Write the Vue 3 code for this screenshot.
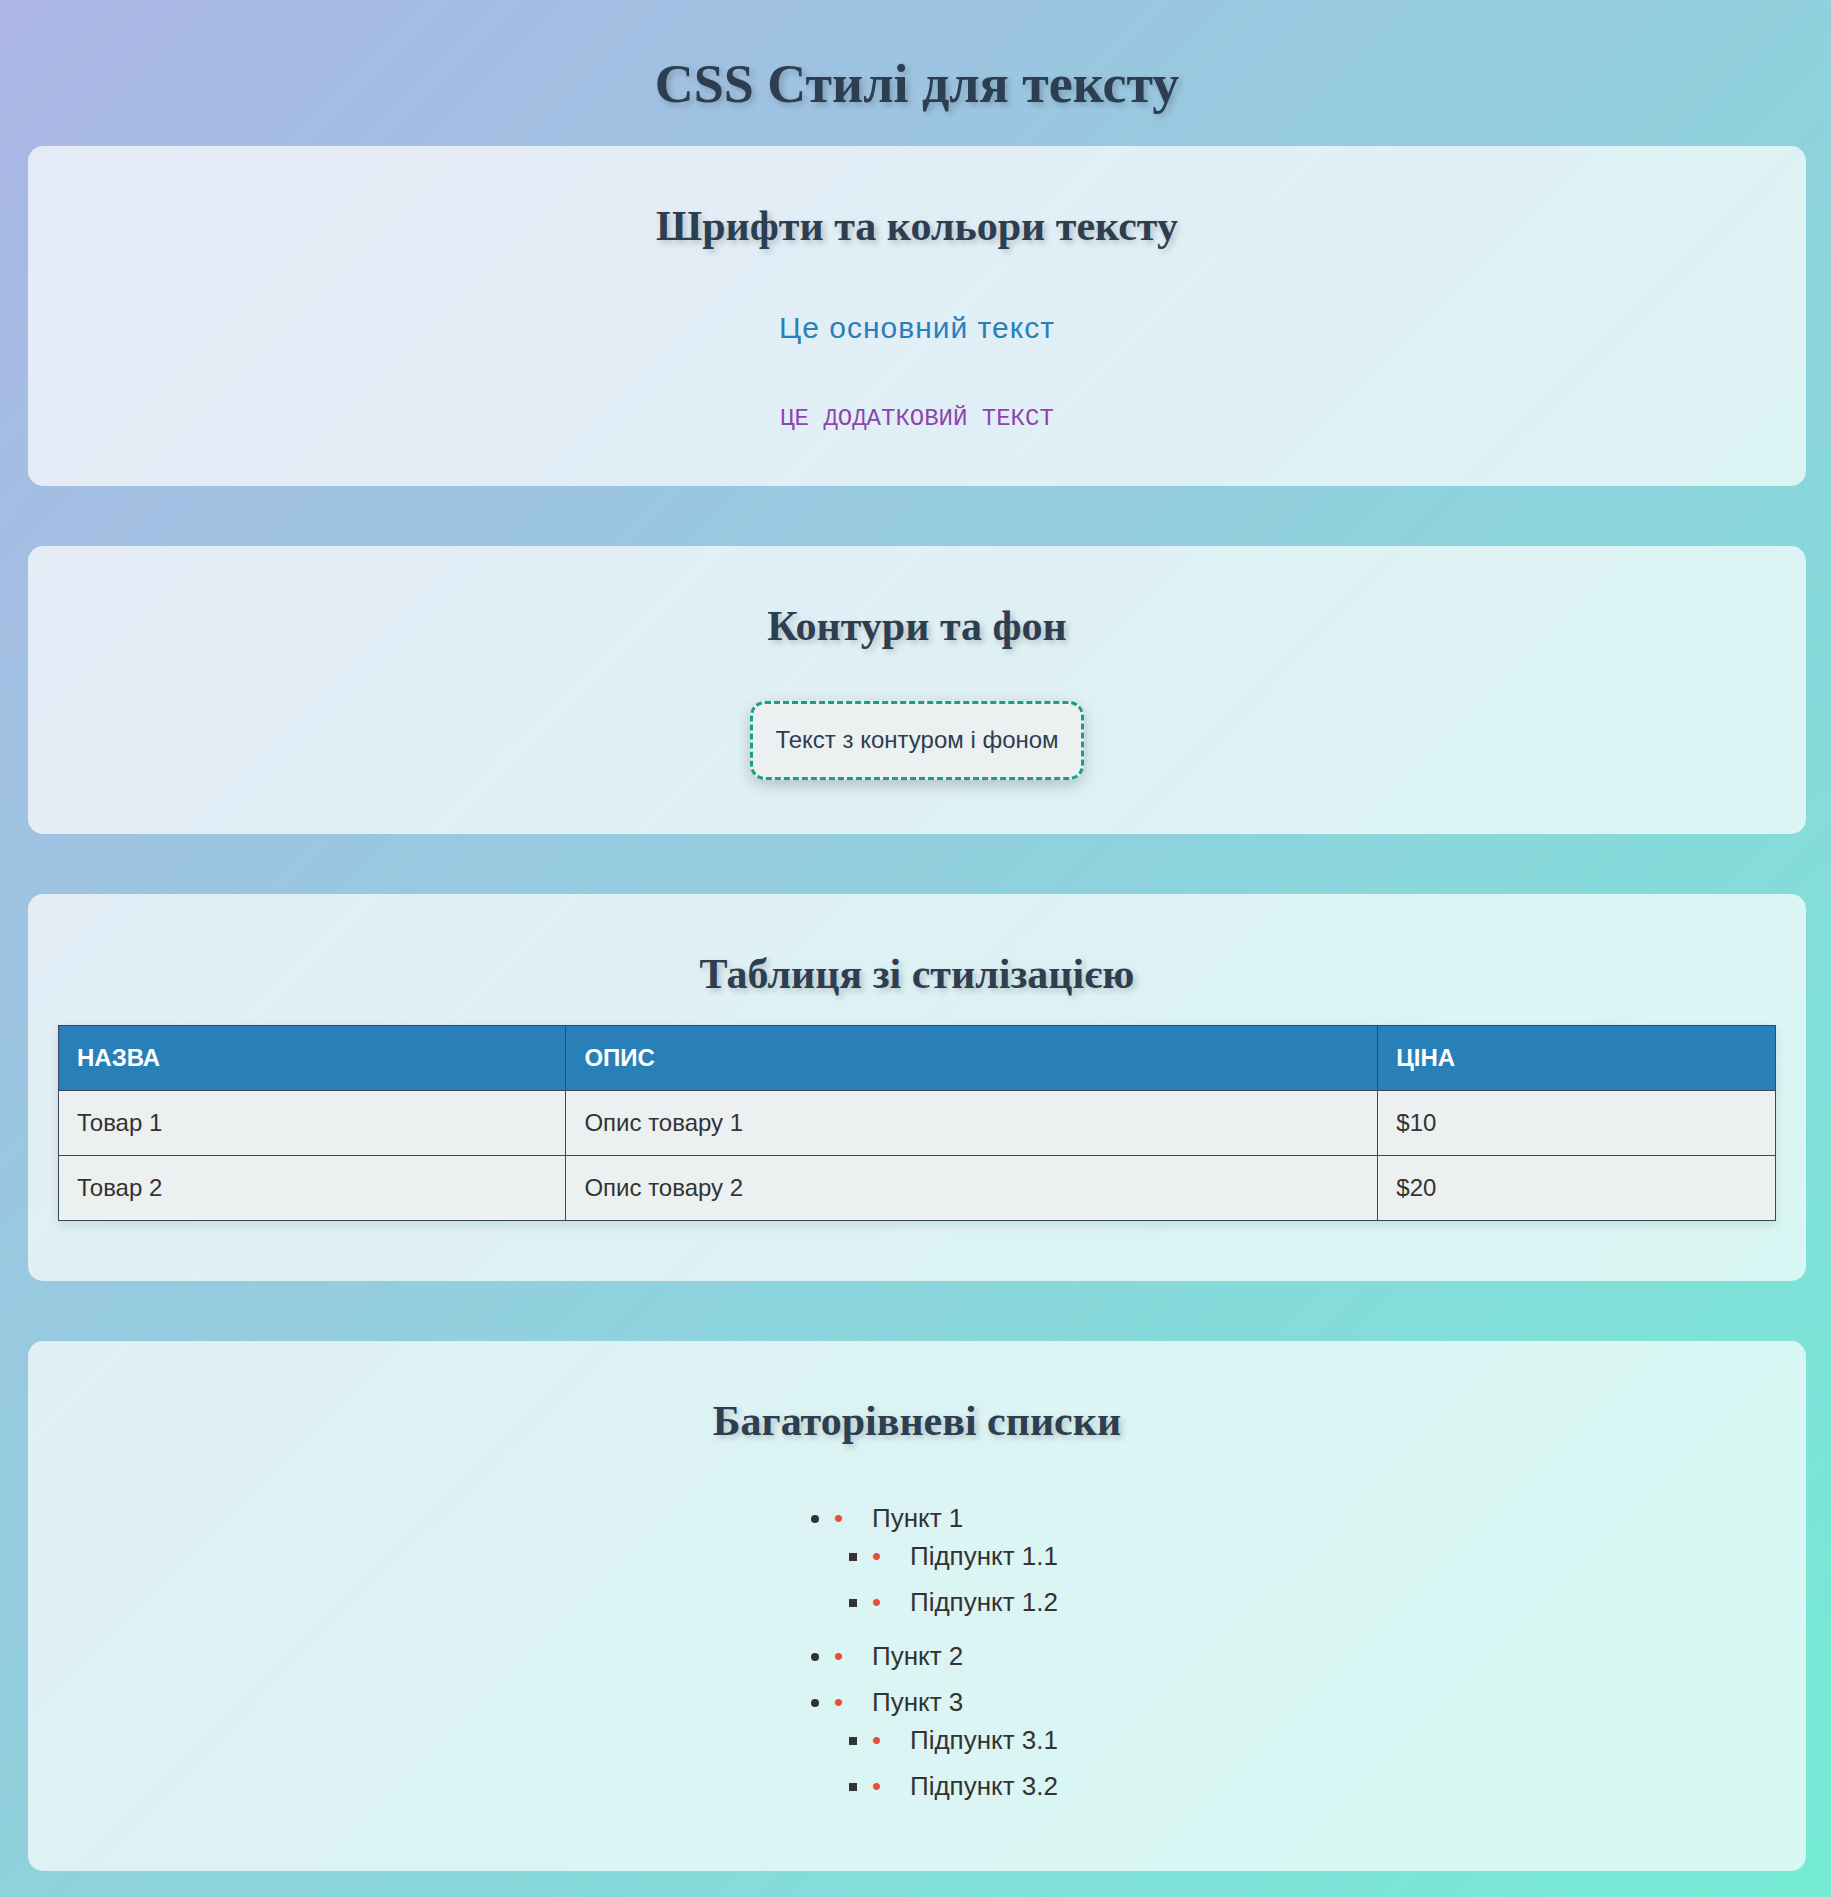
<script setup>
const products = [
  { name: 'Товар 1', text: 'Опис товару 1', price: '$10' },
  { name: 'Товар 2', text: 'Опис товару 2', price: '$20' },
]
const items = [
  { label: 'Пункт 1', children: ['Підпункт 1.1', 'Підпункт 1.2'] },
  { label: 'Пункт 2', children: [] },
  { label: 'Пункт 3', children: ['Підпункт 3.1', 'Підпункт 3.2'] },
]
</script>

<template>
  <main class="page">
    <h1>CSS Стилі для тексту</h1>

    <section>
      <h2>Шрифти та кольори тексту</h2>
      <p class="main-text">Це основний текст</p>
      <p class="extra-text">Це додатковий текст</p>
    </section>

    <section>
      <h2>Контури та фон</h2>
      <div class="outlined">Текст з контуром і фоном</div>
    </section>

    <section>
      <h2>Таблиця зі стилізацією</h2>
      <table>
        <thead>
          <tr><th>Назва</th><th>Опис</th><th>Ціна</th></tr>
        </thead>
        <tbody>
          <tr v-for="p in products" :key="p.name">
            <td>{{ p.name }}</td><td>{{ p.text }}</td><td>{{ p.price }}</td>
          </tr>
        </tbody>
      </table>
    </section>

    <section>
      <h2>Багаторівневі списки</h2>
      <ul class="list">
        <li v-for="item in items" :key="item.label">{{ item.label }}
          <ul v-if="item.children.length">
            <li v-for="child in item.children" :key="child">{{ child }}</li>
          </ul>
        </li>
      </ul>
    </section>
  </main>
</template>

<style>
body {
  margin: 0;
}
</style>

<style scoped>
.page {
  display: flow-root;
  box-sizing: border-box;
  min-height: 100vh;
  padding: 25px 25px 25px 28px;
  background: linear-gradient(135deg, #acb6e5, #74ebd5);
  color: #333;
  font-family: "Liberation Sans", Arial, sans-serif;
  font-size: 24px;
  line-height: 38px;
}
h1,
h2 {
  color: #2c3e50;
  font-family: Georgia, "Liberation Serif", serif;
  text-align: center;
  text-shadow: 3px 3px 6px rgba(0, 0, 0, 0.2);
}
h1 {
  margin: 20px 0 23px;
  font-size: 54px;
  line-height: 78px;
}
h2 {
  margin: 20px 0 21px;
  font-size: 42px;
  line-height: 60px;
}
section {
  display: flow-root;
  margin-bottom: 60px;
  padding: 30px;
  border-radius: 15px;
  background: rgba(255, 255, 255, 0.7);
}
section:last-child {
  margin-bottom: 0;
}
.main-text,
.extra-text {
  width: fit-content;
  margin: 48px auto 18px;
}
.main-text {
  color: #2980b9;
  font-size: 30px;
  letter-spacing: 1px;
  line-height: 48px;
}
.extra-text {
  color: #8e44ad;
  font-family: "Courier New", "Liberation Mono", monospace;
  text-transform: uppercase;
}
.main-text + .extra-text {
  margin-top: 48px;
}
.outlined {
  width: fit-content;
  margin: 45px auto 24px;
  padding: 17px 22px 18px;
  border: 3px dashed #16a085;
  border-radius: 15px;
  background: #ecf0f1;
  color: #2c3e50;
  box-shadow: 0 5px 15px rgba(0, 0, 0, 0.2);
}
table {
  width: 100%;
  margin-bottom: 30px;
  border-collapse: collapse;
  box-shadow: 0 4px 10px rgba(0, 0, 0, 0.1);
}
th,
td {
  padding: 13px 18px;
  border: 1px solid #34495e;
  background: #ecf0f1;
  text-align: left;
}
th {
  background: #2980b9;
  color: #fff;
  text-transform: uppercase;
}
.list {
  width: fit-content;
  margin: 48px auto 20px;
  padding-left: 58px;
  list-style: disc;
  font-size: 26px;
}
.list ul {
  padding-left: 38px;
  list-style: square;
}
.list li {
  padding-bottom: 8px;
}
.list li::before {
  content: "•";
  display: inline-block;
  width: 38px;
  color: #e74c3c;
}
</style>
